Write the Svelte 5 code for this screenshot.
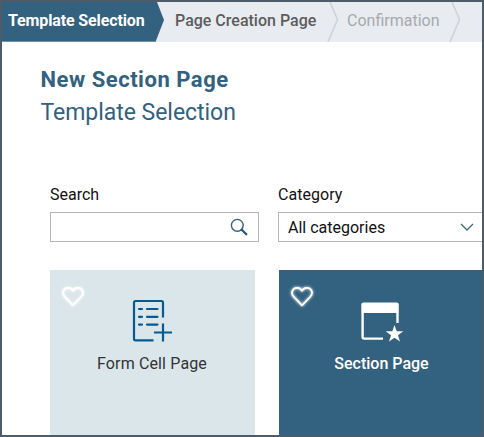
<script>
  let query = $state('');
  const steps = ['Template Selection', 'Page Creation Page', 'Confirmation'];
</script>

<div class="window">
  <nav>
    <svg class="shape" width="480" height="40" viewBox="0 0 480 40" aria-hidden="true">
      <path d="M0 0H155L162 18L153.5 40H0Z" fill="#336180" />
      <path d="M0 39.5H153.5" stroke="#6d91a8" />
      <path d="M327.5 0L335 17.5L325.5 40M449.5 0L457 17.5L447.5 40" transform="translate(0.5 0)" fill="none" stroke="#cdd3d8" stroke-width="1.6" />
    </svg>
    {#each steps as step, i}
      <span class="step s{i}">{step}</span>
    {/each}
  </nav>

  <header>
    <h1>New Section Page</h1>
    <h2>Template Selection</h2>
  </header>

  <div class="filters">
    <div class="field">
      <span class="label search-label">Search</span>
      <div class="control">
        <input aria-label="Search" bind:value={query} />
        <svg width="18" height="18" viewBox="0 0 18 18" aria-hidden="true">
          <circle cx="7.3" cy="7.3" r="5.9" fill="none" stroke="#365f7e" stroke-width="1.4" />
          <path d="M11.7 11.7L16.3 16.2" stroke="#28557a" stroke-width="2.3" stroke-linecap="round" />
        </svg>
      </div>
    </div>
    <div class="field category">
      <span class="label category-label">Category</span>
      <div class="control">
        <span class="value">All categories</span>
        <svg width="14" height="10" viewBox="0 0 14 10" aria-hidden="true">
          <path d="M1 2L7 8L13 2" fill="none" stroke="#3f6685" stroke-width="1.3" />
        </svg>
      </div>
    </div>
  </div>

  {#snippet heart()}
    <svg class="heart" width="26" height="26" viewBox="0 0 26 26" aria-hidden="true">
      <path d="M13 22.3L4.5 13.5C2 10.8 2.7 6.8 5.6 5.4C8.2 4.3 11.3 5 13 7.8C14.7 5 17.8 4.3 20.4 5.4C23.3 6.8 24 10.8 21.5 13.5Z" fill="none" stroke="#fff" stroke-width="1.8" stroke-linejoin="round" />
    </svg>
  {/snippet}

  <div class="cards">
    <div class="card light">
      {@render heart()}
      <svg class="icon" width="44" height="46" viewBox="0 0 44 46" aria-hidden="true">
        <g fill="none" stroke="#055a91" stroke-width="2.2" stroke-linecap="round">
          <path d="M23.5 42.4H5.6Q4 42.4 4 40.8V4.6Q4 3 5.6 3H31.4Q33 3 33 4.6V19.5" stroke-linecap="butt" />
          <path d="M9 11H12M17 11H27.5M9 18.8H12M17 18.8H27.5M9 26.6H12M17 26.6H27.5" />
          <path d="M33 25.5V43.5M24 34.5H42" stroke-linecap="butt" />
        </g>
      </svg>
      <span class="name form-name">Form Cell Page</span>
    </div>
    <div class="card dark">
      {@render heart()}
      <svg class="icon" width="44" height="46" viewBox="0 0 44 46" aria-hidden="true">
        <path d="M3.6 15V39Q3.6 40.6 5.2 40.6H24M38.5 15V25" fill="none" stroke="#fff" stroke-width="2.4" />
        <path d="M2.3 15V6.5Q2.3 4.5 4.3 4.5H37.8Q39.8 4.5 39.8 6.5V15Z" fill="#fff" />
        <path d="M35.5 27L37.7 33.3H44.3L39 37.2L41 43.5L35.5 39.7L30 43.5L32 37.2L26.7 33.3H33.3Z" fill="#fff" />
      </svg>
      <span class="name section-name">Section Page</span>
    </div>
  </div>
</div>

<style>
  :global(body) { margin: 0; overflow: hidden; }
  .window {
    box-sizing: border-box;
    width: 484px;
    height: 437px;
    border: 2px solid #4c5d69;
    background: #fff;
    overflow: hidden;
    font-family: Roboto, "Liberation Sans", sans-serif;
    font-size: 16px;
    color: #111;
  }
  svg { display: block; flex: none; }
  nav {
    position: relative;
    display: flex;
    height: 40px;
    background: #e8ecf0;
  }
  .shape { position: absolute; left: 0; top: 0; }
  .step { position: relative; line-height: 37px; white-space: nowrap; }
  .s0 { width: 167px; padding-left: 6px; box-sizing: border-box; color: #fff; font-weight: 700; letter-spacing: -0.13px; }
  .s1 { width: 178px; padding-left: 6px; box-sizing: border-box; color: #5c5c5c; font-weight: 500; }
  .s2 { color: #a5a9ac; }
  header { padding: 21px 0 0 38.5px; color: #336180; white-space: nowrap; }
  h1, h2 { margin: 0; font-size: 22px; line-height: 33px; }
  h1 { letter-spacing: 0.53px; }
  h2 { font-size: 23px; font-weight: 400; letter-spacing: -0.04px; }
  .filters { display: flex; margin: 54px 0 0 48px; }
  .field { width: 209px; flex: none; }
  .category { margin-left: 19px; width: 230px; }
  .label { display: block; line-height: 23px; height: 29px; }
  .category-label { letter-spacing: 0.05px; }
  .control {
    box-sizing: border-box;
    height: 30px;
    border: 1px solid #b5b5b5;
    display: flex;
    align-items: center;
    justify-content: space-between;
    padding: 0 10px;
    background: #fff;
  }
  .category .control { padding: 0 33px 0 9px; }
  input { flex: 1; min-width: 0; border: 0; outline: 0; padding: 0; background: none; font: inherit; }
  .cards { display: flex; margin: 28px 0 0 48px; gap: 24px; }
  .card {
    position: relative;
    flex: none;
    width: 205px;
    height: 180px;
    display: flex;
    flex-direction: column;
    align-items: center;
    padding-top: 28px;
    box-sizing: border-box;
  }
  .light { background: #dbe6eb; color: #333; }
  .dark { background: #336180; color: #fff; font-weight: 500; }
  .heart { position: absolute; left: 10px; top: 13px; filter: drop-shadow(0 0 1.5px #fff); }
  .icon { margin-right: 1px; }
  .name { margin-top: 8px; line-height: 24px; white-space: nowrap; }
  .form-name { letter-spacing: 0.14px; margin-right: 1px; }
</style>
